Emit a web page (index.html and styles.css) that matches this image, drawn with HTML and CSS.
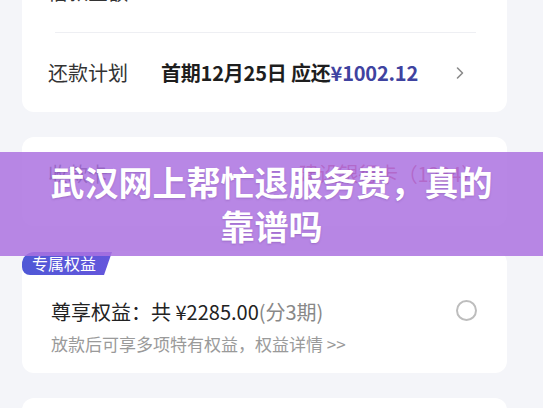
FILE: index.html
```html
<!DOCTYPE html>
<html lang="zh-CN">
<head>
    <meta charset="UTF-8">
    <meta name="viewport" content="width=device-width, initial-scale=1.0">
    <title>武汉网上帮忙退服务费，真的靠谱吗</title>
    <link rel="stylesheet" href="styles.css">
</head>
<body>
    <div class="page">
        <div class="card">
            <div class="row row-top">
                <span class="label">借款金额</span>
                <span class="value">¥10000.00</span>
            </div>
            <div class="divider"></div>
            <div class="row row-plan">
                <span class="label">还款计划</span>
                <span class="value">首期12月25日 应还<span class="price">¥1002.12</span></span>
                <span class="chevron">
                    <svg width="10" height="14" viewBox="0 0 10 14"><path d="M2.5 2 L7.5 7 L2.5 12" fill="none" stroke="#8a8a8a" stroke-width="1.6" stroke-linecap="round" stroke-linejoin="round"/></svg>
                </span>
            </div>
        </div>

        <div class="card card-bank">
            <div class="row row-bank">
                <span class="label">收款卡</span>
                <span class="value bank">建设银行卡（1234）</span>
            </div>
        </div>

        <div class="card card-benefit">
            <span class="badge">专属权益</span>
            <div class="benefit">
                <div class="benefit-text">
                    <p class="benefit-title">尊享权益：共 ¥2285.00<span class="muted">(分3期)</span></p>
                    <p class="benefit-sub">放款后可享多项特有权益，权益详情 &gt;&gt;</p>
                </div>
                <span class="radio"></span>
            </div>
        </div>

        <div class="card card-next"></div>
    </div>

    <div class="banner">
        <h1>武汉网上帮忙退服务费，真的靠谱吗</h1>
    </div>
</body>
</html>
```

FILE: styles.css
```css
body {
    margin: 0;
    background-color: #f4f5f9;
    font-family: "Noto Sans CJK SC", "Noto Sans", sans-serif;
    color: #222;
    overflow: hidden;
}
.page {
    margin-top: -40px;
    padding: 0 36px 0 22px;
}
.card {
    background-color: #fff;
    border-radius: 12px;
    margin-bottom: 25px;
}
.row {
    display: flex;
    align-items: center;
    padding: 0 26px;
    font-size: 20px;
}
.row-top {
    height: 72px;
    align-items: flex-start;
    padding-top: 18px;
    box-sizing: border-box;
    line-height: 28px;
    color: #999;
}
.divider {
    height: 1px;
    background-color: #eeeff3;
    margin: 0 31px 0 33px;
}
.row-plan {
    height: 79px;
}
.label {
    width: 113px;
    color: #333;
    flex-shrink: 0;
}
.value {
    font-weight: 700;
    color: #1e1e1e;
    letter-spacing: -0.2px;
}
.price {
    color: #3f43a0;
}
.chevron {
    margin-left: auto;
    margin-right: 16px;
    display: flex;
}
.card-bank {
    height: 89px;
}
.row-bank {
    height: 72px;
}
.bank {
    margin-left: auto;
    font-weight: 400;
    color: #d6364a;
}
.card-benefit {
    padding-bottom: 17px;
}
.badge {
    display: inline-block;
    height: 23px;
    line-height: 23px;
    padding: 0 16px 0 10px;
    font-size: 16px;
    color: #fff;
    background: linear-gradient(90deg, #4f58d6, #6556dc);
    border-radius: 12px 0 0 8px;
    clip-path: polygon(0 0, 100% 0, calc(100% - 8px) 100%, 0 100%);
}
.benefit {
    display: flex;
    align-items: flex-start;
    padding: 23px 30px 0 29px;
}
.benefit-text {
    flex: 1;
}
.benefit-title {
    margin: 0;
    font-size: 20px;
    line-height: 28px;
    color: #222;
}
.muted {
    color: #888;
}
.benefit-sub {
    margin: 6px 0 0;
    font-size: 17px;
    line-height: 24px;
    color: #9a9a9a;
}
.radio {
    width: 17px;
    height: 17px;
    border: 2px solid #bdbdbd;
    border-radius: 50%;
    margin-top: 2px;
}
.card-next {
    height: 60px;
}
.banner {
    position: absolute;
    top: 152px;
    left: 0;
    right: 0;
    height: 104px;
    display: flex;
    align-items: center;
    justify-content: center;
    padding: 0 40px;
    background-color: rgba(172, 114, 224, 0.85);
}
.banner h1 {
    margin: 0;
    font-size: 34px;
    line-height: 44px;
    font-weight: 700;
    color: #fff;
    text-align: center;
    text-shadow: 0 1px 2px rgba(80, 30, 120, 0.25);
}
```
